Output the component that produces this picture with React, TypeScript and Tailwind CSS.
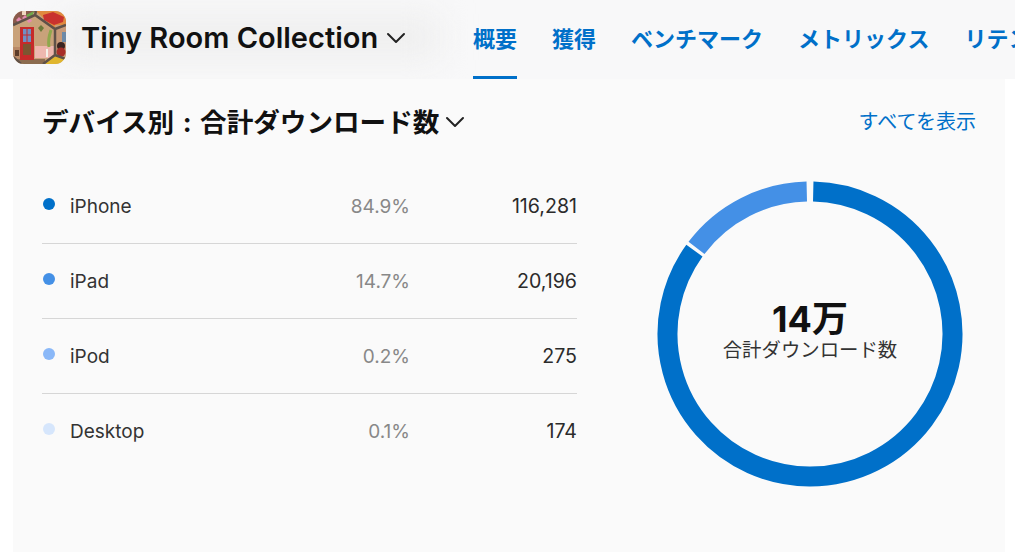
import React from 'react';
import { ChevronDown } from 'lucide-react';

const FONT = "font-['Inter','Noto_Sans_CJK_JP',sans-serif]";

const TABS = ['概要', '獲得', 'ベンチマーク', 'メトリックス', 'リテンション'];

const ROWS = [
  { name: 'iPhone', share: '84.9%', count: '116,281', dot: 'bg-[#0070c9]' },
  { name: 'iPad', share: '14.7%', count: '20,196', dot: 'bg-[#4490e6]' },
  { name: 'iPod', share: '0.2%', count: '275', dot: 'bg-[#8ab8f8]' },
  { name: 'Desktop', share: '0.1%', count: '174', dot: 'bg-[#d6e6fc]' },
];

function AppIcon() {
  return (
    <svg width="53" height="53" viewBox="0 0 53 53" className="shrink-0 rounded-[11px]">
      <rect width="53" height="53" fill="#c9a27a" />
      <path d="M0 0h23L0 14z" fill="#8a5a4c" />
      <path d="M23 0h30v14l-11 4z" fill="#e0893e" />
      <path d="M30 4l10-3 11 5-1 5-9 3-10-5z" fill="#c9322e" />
      <path d="M3 9l3-3 3 3-3 3zM9 7l3-3 3 3-3 3zM14 10l3-3 2 3-3 2z" fill="#e58ab0" />
      <path d="M13 4l8-4-2 6-4 1z" fill="#6fa84a" />
      <rect x="9" y="0" width="4" height="4" fill="#f0d8c0" />
      <rect x="0" y="36" width="7" height="17" fill="#b98a68" />
      <rect x="2" y="39" width="4" height="6" fill="#5c3c2a" />
      <rect x="22" y="35" width="20" height="12" fill="#eeb7ae" />
      <rect x="0" y="48" width="32" height="5" fill="#8c6c50" />
      <rect x="42" y="14" width="11" height="34" fill="#c89a78" />
      <rect x="49" y="21" width="4" height="10" fill="#6d8aa8" />
      <circle cx="48" cy="35" r="4" fill="#3a2420" />
      <circle cx="48" cy="41" r="4.5" fill="#a82e28" />
      <path d="M32 53l8-7h13v7z" fill="#e0b62e" />
      <path d="M0 14L22 4L42 18L53 14M23 0L22 4M42 18V44L53 48M42 44L30 53M0 46L8 53" fill="none" stroke="#5f5148" strokeWidth="2.5" />
      <rect x="7" y="16" width="14" height="33" fill="#c62a2a" />
      <rect x="10" y="18" width="8" height="13" fill="#6f8fc4" />
      <path d="M14 18v13M10 24h8" stroke="#c62a2a" strokeWidth="1" />
      <rect x="10" y="33" width="8" height="11" fill="#7c5530" />
      <path d="M25 17l3-3 3 3-3 4z" fill="#6c7a3a" />
      <path d="M38 19c-2 6-3 12-2 17" stroke="#8fa84c" strokeWidth="3" fill="none" />
      <rect x="33" y="38" width="2" height="8" fill="#f4f0e8" />
    </svg>
  );
}

function polar(deg: number, r: number) {
  const a = ((deg - 90) * Math.PI) / 180;
  return [160 + r * Math.cos(a), 160 + r * Math.sin(a)];
}

function arc(from: number, to: number) {
  const [x1, y1] = polar(from, 142.5);
  const [x2, y2] = polar(to, 142.5);
  const large = to - from > 180 ? 1 : 0;
  return `M${x1} ${y1}A142.5 142.5 0 ${large} 1 ${x2} ${y2}`;
}

function Ring() {
  return (
    <div className="relative h-[320px] w-[320px]">
      <svg width="320" height="320" viewBox="0 0 320 320">
        <path d={arc(1.3, 305.8)} fill="none" stroke="#0070c9" strokeWidth="20" />
        <path d={arc(307.2, 358.7)} fill="none" stroke="#4490e6" strokeWidth="20" />
      </svg>
      <div className="absolute inset-0 flex flex-col items-center justify-center pb-[7px]">
        <span className="text-[36px] font-bold leading-[38px] text-[#111]">14万</span>
        <span className="text-[19.4px] leading-[24px] text-[#333]">合計ダウンロード数</span>
      </div>
    </div>
  );
}

export default function App() {
  return (
    <div className={`${FONT} relative h-[552px] w-[1015px] overflow-hidden bg-white`}>
      {/* Top nav */}
      <header className="relative flex h-[79px] items-center overflow-hidden bg-[#f8f8f9] pl-[13px]">
        <div className="absolute left-[60px] top-[14px] h-[46px] w-[380px] bg-[#efefef] blur-[16px]" />
        <div className="relative mb-[4px] flex items-center">
          <AppIcon />
          <span className="ml-[15px] w-[299px] whitespace-nowrap text-[29px] font-semibold leading-none text-[#111]">
            Tiny Room Collection
          </span>
          <ChevronDown className="h-[32px] w-[32px] text-[#222]" strokeWidth={1.5} />
        </div>
        <nav className="relative ml-[61px] flex h-full gap-[35px]">
          {TABS.map((tab, i) => (
            <div
              key={tab}
              className={`flex items-center whitespace-nowrap border-b-[3px] pt-[3px] text-[22px] font-bold text-[#0070c9] ${
                i === 0 ? 'border-[#0070c9]' : 'border-transparent'
              }`}
            >
              {tab}
            </div>
          ))}
        </nav>
      </header>

      {/* Card */}
      <main className="ml-[13px] mr-[10px] h-[473px] bg-[#fafafa] pl-[29px] pr-[29px] pt-[22px]">
        <div className="flex h-[42px] items-center justify-between">
          <div className="flex items-center">
            <h2 className="whitespace-nowrap text-[26.6px] font-bold leading-none text-[#111]">
              デバイス別<span className="mx-[8.5px]">:</span>合計ダウンロード数
            </h2>
            <ChevronDown className="h-[32px] w-[32px] text-[#222]" strokeWidth={1.5} />
          </div>
          <a className="text-[20px] text-[#0070c9]">すべてを表示</a>
        </div>

        <div className="flex">
          <ul className="mt-[26px] w-[535px]">
            {ROWS.map((row, i) => (
              <li
                key={row.name}
                className={`flex h-[75px] items-center border-b pt-[2px] text-[19px] ${
                  i < 3 ? 'border-[#d6d6d6]' : 'border-transparent'
                }`}
              >
                <span className={`mb-[6px] ml-[1px] h-[12px] w-[12px] rounded-full ${row.dot}`} />
                <span className="ml-[15px] text-[#333]">{row.name}</span>
                <span className="ml-auto text-[#888]">{row.share}</span>
                <span className="w-[167px] text-right text-[19.6px] text-[#2b2b2b]">{row.count}</span>
              </li>
            ))}
          </ul>
          <div className="ml-[73px] mt-[31px]">
            <Ring />
          </div>
        </div>
      </main>
    </div>
  );
}
